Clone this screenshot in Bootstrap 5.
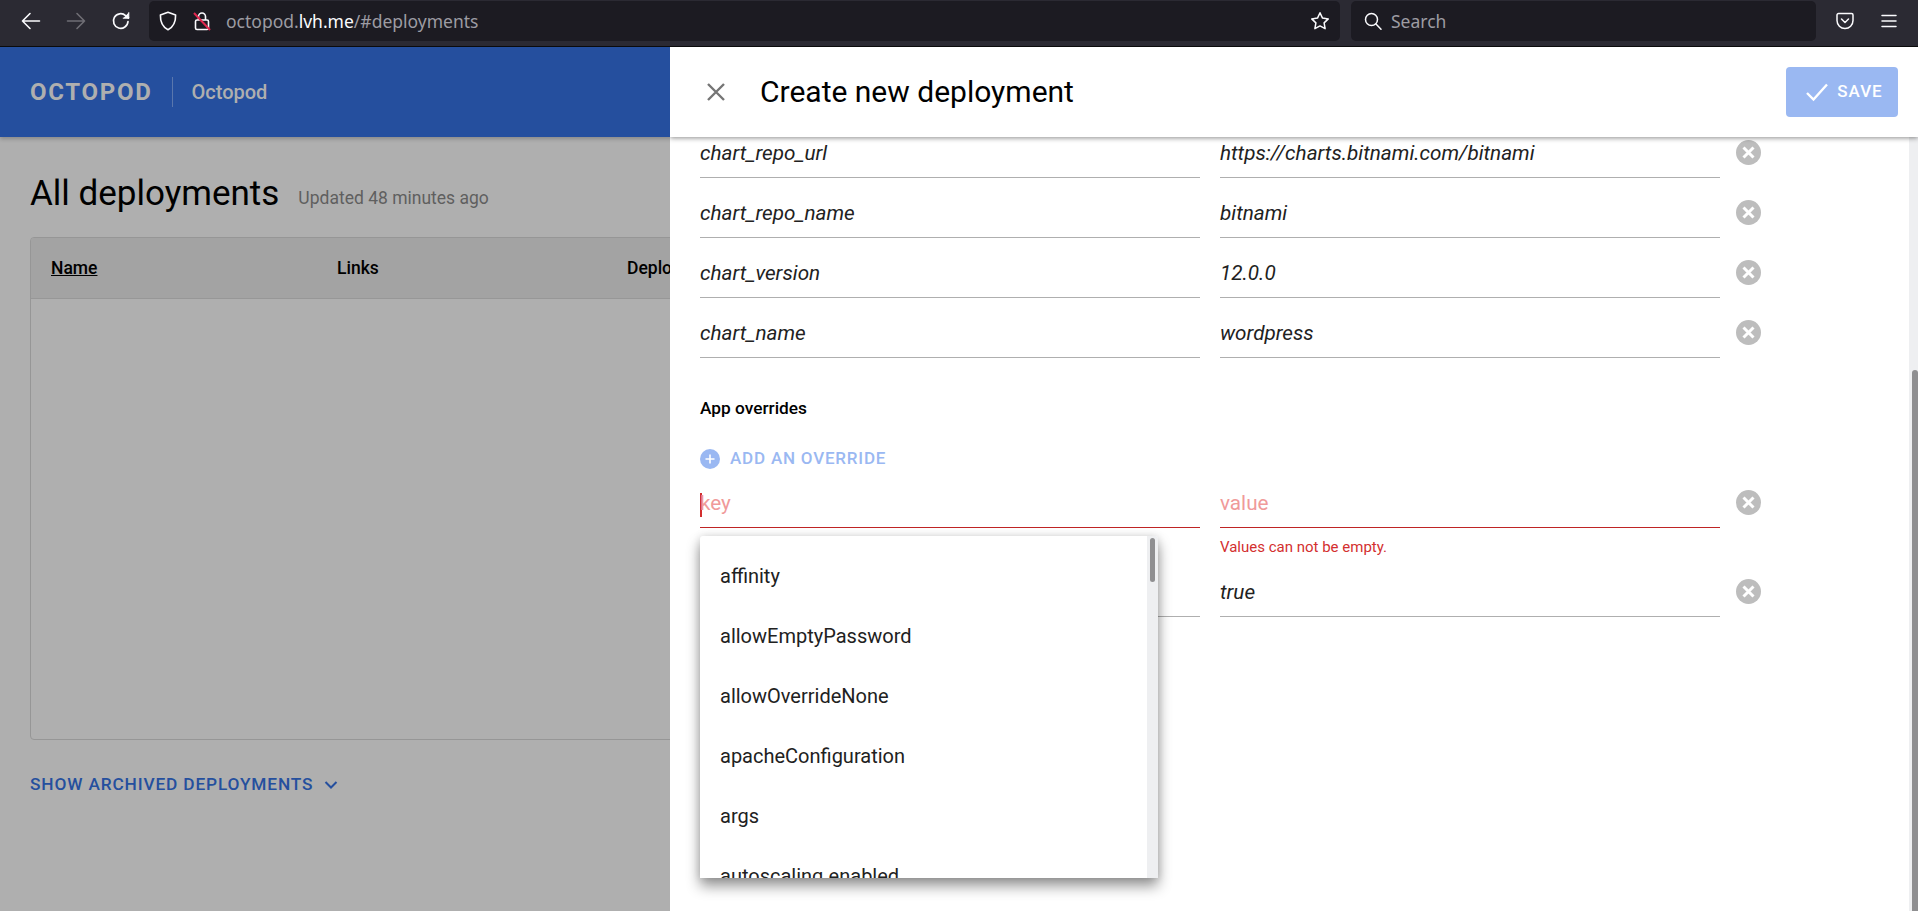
<!DOCTYPE html>
<html lang="en">
<head>
    <meta charset="UTF-8">
    <title>Octopod</title>
    <meta name="viewport" content="width=device-width, initial-scale=1">
    <link href="https://cdn.jsdelivr.net/npm/bootstrap@5.3.0/dist/css/bootstrap.min.css" rel="stylesheet">
    <style>
        html, body { height: 100%; overflow: hidden; }
        body { font-family: Roboto, "Liberation Sans", sans-serif; background: #afafaf; }

        /* browser chrome */
        .chrome-bar { height: 47px; background: #2b2a33; border-bottom: 1px solid #0c0c0d; font-family: "Noto Sans", "Open Sans", sans-serif; padding: 1px 0 5px 0; }
        .chrome-btn { width: 45px; flex: none; }
        .chrome-btns { width: 149px; padding-left: 8px; flex: none; }
        .url-box { width: 1191px; background: #1c1b22; border-radius: 5px; flex: none; padding: 0 10px 0 10px; }
        .url-text { font-size: 17.5px; color: #9d9ca3; margin-left: 15px; }
        .url-text b { font-weight: 400; color: #fbfbfe; }
        .search-box { width: 465px; margin-left: 11px; background: #1c1b22; border-radius: 5px; flex: none; padding: 0 13px; font-size: 17.5px; color: #9d9ca3; }
        .search-box span { margin-left: 1px; }
        .pocket-icon { margin-left: 20px; }
        .menu-icon { margin-left: 27px; }

        .app-area { height: 864px; }

        /* dimmed page behind the panel */
        .top-band { height: 90px; background: #254f9e; padding-left: 30px; box-shadow: 0 2px 4px rgba(0,0,0,.22); }
        .brand-text { font-size: 24px; font-weight: 700; color: #afafaf; letter-spacing: 1.7px; padding-right: 19px; border-right: 1px solid #5a77ad; line-height: 30px; }
        .brand-sub { font-size: 20px; font-weight: 500; color: #afafaf; padding-left: 19px; }
        .page-main { padding: 36px 30px 0 30px; }
        .page-title { font-size: 35px; font-weight: 400; color: #000; margin: 0; line-height: 42px; }
        .page-updated { font-size: 17.5px; color: #5f5f5f; margin-left: 19px; padding-top: 8px; }
        .table-box { margin-top: 22px; height: 503px; border: 1px solid #969696; border-radius: 4px; overflow: hidden; }
        .table-head { height: 61px; background: #a3a3a3; border-bottom: 1px solid #979797; font-size: 17.5px; font-weight: 500; color: #000; }
        .cell-name { width: 306px; padding-left: 20px; text-decoration: underline; flex: none; }
        .cell-links { width: 290px; flex: none; }
        .archived-link { margin-top: 32px; font-size: 17.3px; font-weight: 500; letter-spacing: .85px; color: #254f9e; }
        .archived-link svg { margin-left: 11px; }

        /* side panel */
        .side-panel { top: 0; right: 0; bottom: 0; width: 1248px; background: #fff; overflow: hidden; }
        .panel-head { height: 90px; background: #fff; padding: 0 20px 0 36px; box-shadow: 0 1px 5px rgba(0,0,0,.45); z-index: 3; }
        .panel-title { font-size: 30px; font-weight: 400; color: #000; margin: 0 0 0 34px; }
        .save-btn { width: 112px; height: 50px; background: #9ab8f2; color: #fff; border: 0; border-radius: 4px; font-size: 17px; font-weight: 500; letter-spacing: 1px; padding: 0 0 0 4px; }
        .panel-scroll { width: 1239px; padding: 0 30px; margin-top: -8px; }
        .panel-track { top: 90px; right: 0; bottom: 0; width: 9px; background: #eeeff1; z-index: 2; }
        .panel-thumb { top: 233px; left: 3px; right: 0; bottom: 0; background: #8f8f91; border-radius: 3px 3px 0 0; }

        .kv-row { height: 60px; }
        .kv-field { width: 500px; height: 49px; margin-right: 20px; flex: none; border-bottom: 1px solid #afafaf; font-size: 20.7px; font-style: italic; color: #212121; line-height: 48px; }
        .kv-field + .kv-field { margin-right: 16px; }
        .kv-field.is-empty { border-bottom-color: #bf2424; font-style: normal; color: #f09a9a; }
        .kv-caret { width: 2px; height: 24px; background: #d32f2f; display: inline-block; vertical-align: middle; margin-right: -2px; }
        .kv-del { flex: none; height: 47px; }
        .section-label { font-size: 17.3px; font-weight: 500; color: #000; height: 20px; line-height: 20px; margin-top: 29px; }
        .add-link { font-size: 17px; font-weight: 500; letter-spacing: .8px; color: #9ab8f2; margin-top: 29px; height: 24px; margin-bottom: 8px; }
        .add-link svg { margin-right: 10px; }
        .kv-error { font-size: 15px; color: #d32f2f; margin: 11px 0 0 520px; line-height: 17px; height: 29px; }
        .error-row { height: 49px; }

        /* autocomplete menu */
        .suggest-menu { top: 489px; left: 30px; width: 458px; height: 342px; background: #fff; overflow: hidden; border-radius: 3px 3px 0 0; box-shadow: 0 8px 14px rgba(0,0,0,.42), 0 0 8px rgba(0,0,0,.12); z-index: 4; padding-top: 10px; }
        .suggest-item { height: 60px; line-height: 60px; padding-left: 20px; font-size: 20px; color: #212121; }
        .suggest-track { top: 0; right: 0; bottom: 0; width: 11px; background: #eeeff1; }
        .suggest-thumb { top: 2px; left: 3px; width: 5px; height: 44px; background: #8f8f91; border-radius: 3px; }
    </style>
</head>
<body>

    <div class="chrome-bar d-flex align-items-stretch">
        <div class="chrome-btns d-flex align-items-center">
            <div class="chrome-btn d-flex justify-content-center">
                <svg width="20" height="20" viewBox="0 0 20 20" fill="none" stroke="#fbfbfe" stroke-width="1.6" stroke-linecap="round" stroke-linejoin="round"><path d="M1.5 10h17M9 2.5 1.5 10 9 17.5"/></svg>
            </div>
            <div class="chrome-btn d-flex justify-content-center">
                <svg width="20" height="20" viewBox="0 0 20 20" fill="none" stroke="#6f6e75" stroke-width="1.6" stroke-linecap="round" stroke-linejoin="round"><path d="M1.5 10h17M11 2.5l7.5 7.5-7.5 7.5"/></svg>
            </div>
            <div class="chrome-btn d-flex justify-content-center">
                <svg width="20" height="20" viewBox="0 0 20 20" fill="none" stroke="#fbfbfe" stroke-width="1.7" stroke-linecap="round" stroke-linejoin="round"><path d="M17 10.5A7.3 7.3 0 1 1 14.6 4.6L17.5 7"/><path d="M17.8 1.6v5.6h-5.6" fill="#fbfbfe" stroke-width="1"/></svg>
            </div>
        </div>
        <div class="url-box d-flex align-items-center">
            <svg class="me-3" width="18" height="20" viewBox="0 0 18 20" fill="none" stroke="#fbfbfe" stroke-width="1.6" stroke-linejoin="round"><path d="M9 1.2 16.6 4c.2 6.5-1.6 11.600-7.600 14.800C3 15.600 1.200 10.500 1.400 4z"/></svg>
            <svg width="18" height="20" viewBox="0 0 18 20" fill="none"><path d="M5.500 9V5.500a3.500 3.500 0 0 1 7 0V9" stroke="#fbfbfe" stroke-width="1.600"/><rect x="2.500" y="9" width="13" height="9.500" rx="1.500" stroke="#fbfbfe" stroke-width="1.600"/><path d="M1 2 17 19" stroke="#e22850" stroke-width="2"/></svg>
            <span class="url-text">octopod.<b>lvh.me</b>/#deployments</span>
            <svg class="ms-auto" width="20" height="20" viewBox="0 0 20 20" fill="none" stroke="#fbfbfe" stroke-width="1.500" stroke-linejoin="round"><path d="m10 1.800 2.500 5.300 5.800.800-4.200 4 1 5.800-5.100-2.800-5.100 2.800 1-5.800-4.200-4 5.800-.800z"/></svg>
        </div>
        <div class="search-box d-flex align-items-center">
            <svg class="me-2" width="18" height="18" viewBox="0 0 18 18" fill="none" stroke="#fbfbfe" stroke-width="1.500" stroke-linecap="round"><circle cx="7.500" cy="7.500" r="6"/><path d="m12 12 5 5.300"/></svg>
            <span>Search</span>
        </div>
        <div class="d-flex align-items-center flex-grow-1">
            <svg class="pocket-icon" width="18" height="18" viewBox="0 0 18 18" fill="none" stroke="#fbfbfe" stroke-width="1.500" stroke-linecap="round" stroke-linejoin="round"><path d="M2.500 1.500h13a1.500 1.500 0 0 1 1.500 1.500v5.500a8 8 0 0 1-16 0V3a1.500 1.500 0 0 1 1.500-1.500z"/><path d="m5.500 7 3.500 3.500L12.500 7"/></svg>
            <svg class="menu-icon" width="16" height="14" viewBox="0 0 16 14" fill="none" stroke="#fbfbfe" stroke-width="1.500" stroke-linecap="round"><path d="M1 1.500h14M1 7h14M1 12.500h14"/></svg>
        </div>
    </div>

    <div class="app-area position-relative">
        <div class="top-band d-flex align-items-center">
            <span class="brand-text">OCTOPOD</span>
            <span class="brand-sub">Octopod</span>
        </div>
        <div class="page-main">
            <div class="d-flex align-items-center">
                <h1 class="page-title">All deployments</h1>
                <span class="page-updated">Updated 48 minutes ago</span>
            </div>
            <div class="table-box">
                <div class="table-head d-flex align-items-center">
                    <span class="cell-name">Name</span>
                    <span class="cell-links">Links</span>
                    <span>Deployment</span>
                </div>
            </div>
            <div class="archived-link d-flex align-items-center">
                SHOW ARCHIVED DEPLOYMENTS
                <svg width="14" height="10" viewBox="0 0 14 10" fill="none" stroke="#254f9e" stroke-width="2"><path d="m1.500 2 5.500 5.500L12.500 2"/></svg>
            </div>
        </div>

        <div class="side-panel position-absolute d-flex flex-column">
            <div class="panel-head position-relative d-flex align-items-center flex-none">
                <svg width="20" height="20" viewBox="0 0 20 20" fill="none" stroke="#757575" stroke-width="2.400"><path d="m2 2 16 16M18 2 2 18"/></svg>
                <h2 class="panel-title">Create new deployment</h2>
                <button class="save-btn ms-auto d-flex align-items-center justify-content-center" type="button">
                    <svg class="me-2" width="24" height="20" viewBox="0 0 24 20" fill="none" stroke="#fff" stroke-width="2.400"><path d="m2 11 6.500 6.500L22 2.500"/></svg>
                    SAVE
                </button>
            </div>

            <div class="panel-scroll">
                <div class="kv-row d-flex">
                    <div class="kv-field">chart_repo_url</div>
                    <div class="kv-field">https://charts.bitnami.com/bitnami</div>
                    <div class="kv-del d-flex align-items-center"><svg width="25" height="25" viewBox="0 0 25 25"><circle cx="12.500" cy="12.500" r="12.500" fill="#bdbdbd"/><path d="m7.500 7.500 10 10M17.500 7.500l-10 10" stroke="#fff" stroke-width="3"/></svg></div>
                </div>
                <div class="kv-row d-flex">
                    <div class="kv-field">chart_repo_name</div>
                    <div class="kv-field">bitnami</div>
                    <div class="kv-del d-flex align-items-center"><svg width="25" height="25" viewBox="0 0 25 25"><circle cx="12.500" cy="12.500" r="12.500" fill="#bdbdbd"/><path d="m7.500 7.500 10 10M17.500 7.500l-10 10" stroke="#fff" stroke-width="3"/></svg></div>
                </div>
                <div class="kv-row d-flex">
                    <div class="kv-field">chart_version</div>
                    <div class="kv-field">12.0.0</div>
                    <div class="kv-del d-flex align-items-center"><svg width="25" height="25" viewBox="0 0 25 25"><circle cx="12.500" cy="12.500" r="12.500" fill="#bdbdbd"/><path d="m7.500 7.500 10 10M17.500 7.500l-10 10" stroke="#fff" stroke-width="3"/></svg></div>
                </div>
                <div class="kv-row d-flex">
                    <div class="kv-field">chart_name</div>
                    <div class="kv-field">wordpress</div>
                    <div class="kv-del d-flex align-items-center"><svg width="25" height="25" viewBox="0 0 25 25"><circle cx="12.500" cy="12.500" r="12.500" fill="#bdbdbd"/><path d="m7.500 7.500 10 10M17.500 7.500l-10 10" stroke="#fff" stroke-width="3"/></svg></div>
                </div>

                <div class="section-label">App overrides</div>
                <div class="add-link d-flex align-items-center">
                    <svg width="20" height="20" viewBox="0 0 20 20"><circle cx="10" cy="10" r="10" fill="#9ab8f2"/><path d="M10 5.500v9M5.500 10h9" stroke="#fff" stroke-width="1.600"/></svg>
                    ADD AN OVERRIDE
                </div>

                <div class="error-row d-flex">
                    <div class="kv-field is-empty"><span class="kv-caret"></span>key</div>
                    <div class="kv-field is-empty">value</div>
                    <div class="kv-del d-flex align-items-center"><svg width="25" height="25" viewBox="0 0 25 25"><circle cx="12.500" cy="12.500" r="12.500" fill="#bdbdbd"/><path d="m7.500 7.500 10 10M17.500 7.500l-10 10" stroke="#fff" stroke-width="3"/></svg></div>
                </div>
                <div class="kv-error">Values can not be empty.</div>
                <div class="kv-row d-flex">
                    <div class="kv-field"></div>
                    <div class="kv-field">true</div>
                    <div class="kv-del d-flex align-items-center"><svg width="25" height="25" viewBox="0 0 25 25"><circle cx="12.500" cy="12.500" r="12.500" fill="#bdbdbd"/><path d="m7.500 7.500 10 10M17.500 7.500l-10 10" stroke="#fff" stroke-width="3"/></svg></div>
                </div>
            </div>

            <div class="panel-track position-absolute"><div class="panel-thumb position-absolute"></div></div>

            <div class="suggest-menu position-absolute">
                <div class="suggest-item">affinity</div>
                <div class="suggest-item">allowEmptyPassword</div>
                <div class="suggest-item">allowOverrideNone</div>
                <div class="suggest-item">apacheConfiguration</div>
                <div class="suggest-item">args</div>
                <div class="suggest-item">autoscaling.enabled</div>
                <div class="suggest-track position-absolute"><div class="suggest-thumb position-absolute"></div></div>
            </div>
        </div>
    </div>

    <script src="https://cdn.jsdelivr.net/npm/bootstrap@5.3.0/dist/js/bootstrap.bundle.min.js"></script>
</body>
</html>
